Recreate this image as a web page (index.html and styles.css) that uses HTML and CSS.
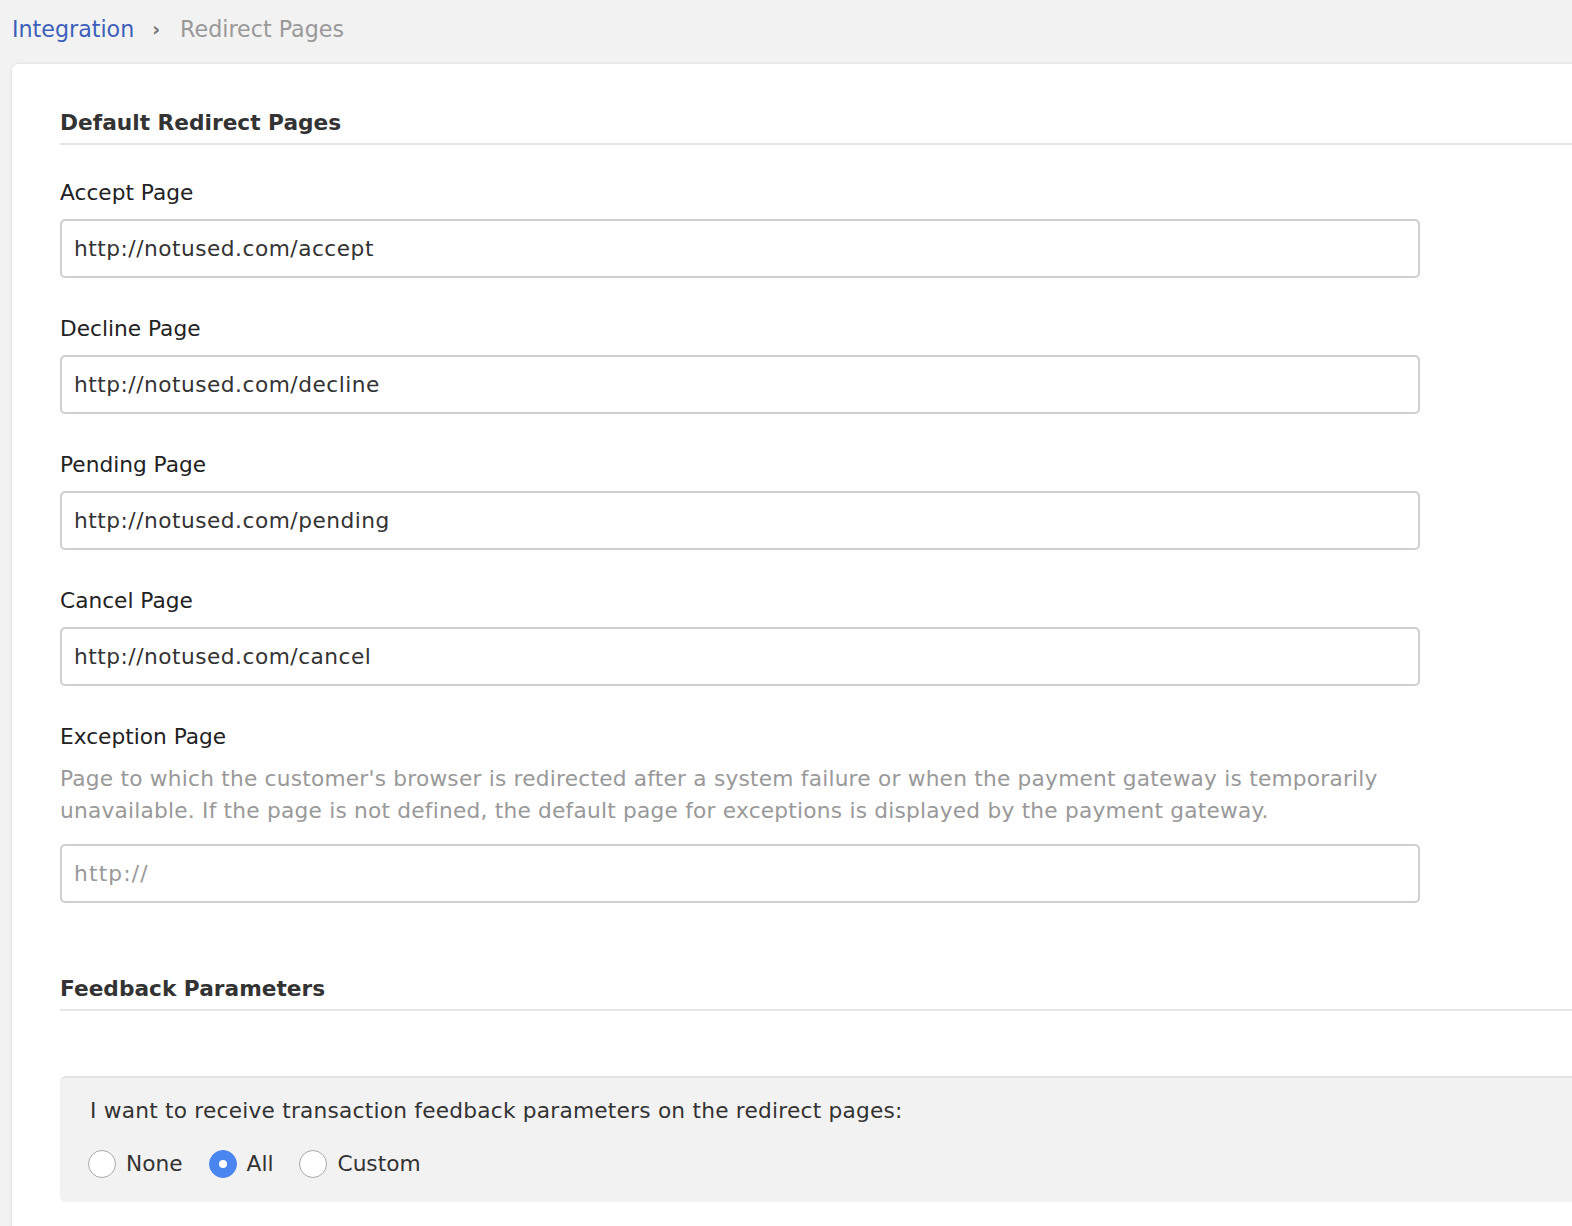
FILE: index.html
```html
<!DOCTYPE html>
<html lang="en">
<head>
<meta charset="utf-8">
<title>Redirect Pages</title>
<link rel="stylesheet" href="styles.css">
</head>
<body>
<nav class="breadcrumb">
  <a class="crumb-link" href="#">Integration</a>
  <span class="crumb-sep">›</span>
  <span class="crumb-current">Redirect Pages</span>
</nav>
<main class="card">
  <h2 class="section-title">Default Redirect Pages</h2>

  <div class="field">
    <label class="field-label">Accept Page</label>
    <input class="text-input" type="text" value="http://notused.com/accept">
  </div>
  <div class="field">
    <label class="field-label">Decline Page</label>
    <input class="text-input" type="text" value="http://notused.com/decline">
  </div>
  <div class="field">
    <label class="field-label">Pending Page</label>
    <input class="text-input" type="text" value="http://notused.com/pending">
  </div>
  <div class="field">
    <label class="field-label">Cancel Page</label>
    <input class="text-input" type="text" value="http://notused.com/cancel">
  </div>
  <div class="field">
    <label class="field-label">Exception Page</label>
    <p class="field-help">Page to which the customer's browser is redirected after a system failure or when the payment gateway is temporarily unavailable. If the page is not defined, the default page for exceptions is displayed by the payment gateway.</p>
    <input class="text-input" type="text" placeholder="http://">
  </div>

  <h2 class="section-title second">Feedback Parameters</h2>

  <div class="feedback-box">
    <p class="feedback-question">I want to receive transaction feedback parameters on the redirect pages:</p>
    <div class="radio-row">
      <label class="radio-option"><span class="radio"></span>None</label>
      <label class="radio-option"><span class="radio checked"></span>All</label>
      <label class="radio-option"><span class="radio"></span>Custom</label>
    </div>
  </div>
</main>
</body>
</html>
```
FILE: styles.css
```css
html, body {
  margin: 0;
  padding: 0;
}
body {
  background: #f2f2f2;
  font-family: "DejaVu Sans", Verdana, sans-serif;
  font-size: 21.7px;
  color: #333;
  overflow: hidden;
  height: 1226px;
}
.breadcrumb {
  box-sizing: border-box;
  height: 64px;
  padding: 0 0 7px 12px;
  line-height: 30px;
  font-size: 22.2px;
  display: flex;
  align-items: center;
}
.crumb-link {
  color: #3c5fba;
  text-decoration: none;
}
.crumb-sep {
  color: #777;
  font-weight: bold;
  font-size: 19px;
  margin: 0 20px 0 18px;
}
.crumb-current {
  color: #999;
}
.card {
  background: #fff;
  margin-left: 12px;
  margin-right: -20px;
  border-radius: 6px 0 0 0;
  box-shadow: 0 0 3px rgba(0,0,0,0.12);
  padding: 44px 0 60px 48px;
  min-height: 1200px;
}
.section-title {
  margin: 0;
  font-size: 21.7px;
  line-height: 30px;
  font-weight: bold;
  color: #333;
  padding-bottom: 5px;
  border-bottom: 2px solid #e6e6e6;
}
.section-title.second {
  margin-top: 71px;
}
.field {
  margin-top: 33px;
  width: 1360px;
}
.field + .field {
  margin-top: 36px;
}
.field-label {
  display: block;
  line-height: 30px;
  color: #222;
  margin-bottom: 11px;
}
.field-help {
  margin: 0 0 17px 0;
  line-height: 32px;
  color: #999;
  letter-spacing: 0.22px;
}
.text-input {
  display: block;
  box-sizing: border-box;
  width: 1360px;
  height: 59px;
  border: 2px solid #cfcfcf;
  border-radius: 5px;
  padding: 0 12px;
  font-family: "DejaVu Sans", Verdana, sans-serif;
  font-size: 21.7px;
  letter-spacing: 0.5px;
  color: #333;
  background: #fff;
  outline: none;
}
.text-input::placeholder {
  color: #999;
  letter-spacing: 1.2px;
}
.feedback-box {
  margin-top: 65px;
  background: #f2f2f2;
  border-top: 2px solid #e2e2e2;
  border-radius: 6px 0 0 6px;
  padding: 18px 0 23px 28px;
}
.feedback-question {
  margin: 0;
  line-height: 30px;
  color: #333;
  padding-left: 2px;
  letter-spacing: 0.22px;
}
.radio-row {
  display: flex;
  align-items: center;
  gap: 26px;
  margin-top: 23px;
  line-height: 30px;
}
.radio-option {
  display: flex;
  align-items: center;
  gap: 10px;
  color: #333;
}
.radio {
  box-sizing: border-box;
  width: 28px;
  height: 28px;
  border-radius: 50%;
  border: 1px solid #a9a9a9;
  background: #fff;
  display: flex;
  align-items: center;
  justify-content: center;
}
.radio.checked {
  background: #4a86ef;
  border-color: #4a86ef;
}
.radio.checked::after {
  content: "";
  width: 8px;
  height: 8px;
  border-radius: 50%;
  background: #fff;
}
```
